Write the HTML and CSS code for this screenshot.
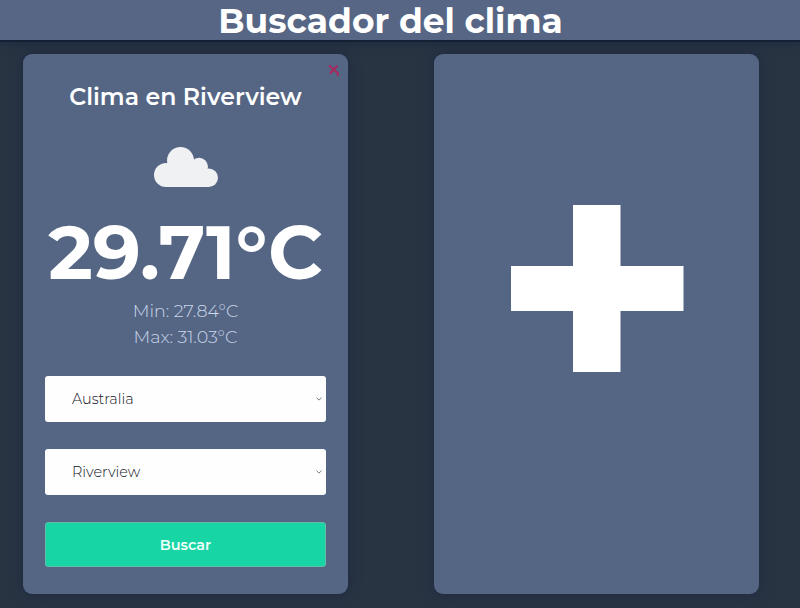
FILE: index.html
```html
<!DOCTYPE html>
<html lang="es">
<head>
<meta charset="utf-8">
<title>Buscador del clima</title>
<link rel="stylesheet" href="styles.css">
</head>
<body>
<header class="header"><h1 class="title">Buscador del clima</h1></header>
<main class="cards">
  <section class="card">
    <button class="close" aria-label="Cerrar"><svg viewBox="0 0 12 14" width="12" height="14"><path d="M1 1.500 10 9.500M9.500 1.500 2 9.500M9.500 8 10 12"/></svg></button>
    <h2 class="city">Clima en Riverview</h2>
    <svg class="cloud" viewBox="0 0 64 40" width="64" height="40"><circle cx="12" cy="28" r="12"/><circle cx="26.500" cy="13.500" r="13.500"/><circle cx="45" cy="19.800" r="9"/><circle cx="54.800" cy="30.800" r="9.200"/><path d="M12 40V20L20 16H46L55 24V40Z"/></svg>
    <p class="temp">29.71°C</p>
    <p class="range min">Min: 27.84°C</p>
    <p class="range max">Max: 31.03°C</p>
    <form class="form">
      <div class="select"><span class="country">Australia</span><svg viewBox="0 0 6 4" width="6" height="4"><path d="M.5.7 3 3.100 5.500.7"/></svg></div>
      <div class="select"><span class="place">Riverview</span><svg viewBox="0 0 6 4" width="6" height="4"><path d="M.5.7 3 3.100 5.500.7"/></svg></div>
      <button type="button" class="submit">Buscar</button>
    </form>
  </section>
  <section class="card add">
    <svg class="plus" viewBox="0 0 173 167" width="173" height="167"><path d="M62 0H109.500V61H172.500V106H109.500V167H62V106H0V61H62Z"/></svg>
  </section>
</main>
</body>
</html>
```

FILE: styles.css
```css
* { box-sizing: border-box; }
body {
  margin: 0;
  height: 608px;
  overflow: hidden;
  background: #293443;
  color: #fff;
  font-family: Montserrat, Inter, sans-serif;
}
h1, h2, p { margin: 0; white-space: nowrap; }
.header {
  display: flex;
  justify-content: center;
  height: 42px;
  padding-right: 19px;
  background: #566684;
  border-bottom: 2px solid #142034;
  box-shadow: 0 1px 8px #1b2a40;
}
.title {
  font-size: 34.4px;
  line-height: 42px;
}
.cards {
  display: grid;
  grid-template-columns: 325px 325px;
  column-gap: 86px;
  padding: 12px 0 0 23px;
}
.card {
  position: relative;
  display: flex;
  flex-direction: column;
  align-items: center;
  height: 540px;
  padding: 0 22px;
  background: #556685;
  border-radius: 9px;
  box-shadow: 0 0 14px #1d2b40;
}
.close {
  position: absolute;
  top: 10px;
  right: 8px;
  width: 12px;
  height: 14px;
  padding: 0;
  border: 0;
  background: none;
}
.close svg { display: block; fill: none; stroke: #a52a60; stroke-width: 2.2; }
.city {
  margin-top: 28px;
  font-size: 23.6px;
  line-height: 30px;
  font-weight: 600;
}
.cloud { margin-top: 35px; margin-left: 1px; fill: #f0f1f3; }
.temp {
  margin-top: 20px;
  font-size: 75.600px;
  line-height: 90px;
  font-weight: 700;
}
.range {
  font-size: 17.500px;
  line-height: 26px;
  font-weight: 300;
  color: #cbd7ea;
}
.min { margin-top: 1px; }
.form {
  display: flex;
  flex-direction: column;
  gap: 27px;
  width: 281px;
  margin-top: 26px;
}
.select {
  display: flex;
  align-items: center;
  justify-content: space-between;
  height: 46px;
  padding: 0 4px 0 27px;
  background: #fefefe;
  border-radius: 3px;
  color: #10131a;
  font-size: 14.400px;
  font-weight: 300;
}
.select svg { fill: none; stroke: #757b86; }
.submit {
  height: 45px;
  border: 1px solid #62bda9;
  border-radius: 3px;
  background: #18d5a6;
  color: #effffa;
  font: 600 14.400px Montserrat, Inter, sans-serif;
}
.add { justify-content: flex-start; }
.plus { margin-top: 151px; margin-left: 1px; fill: #fff; }
```
